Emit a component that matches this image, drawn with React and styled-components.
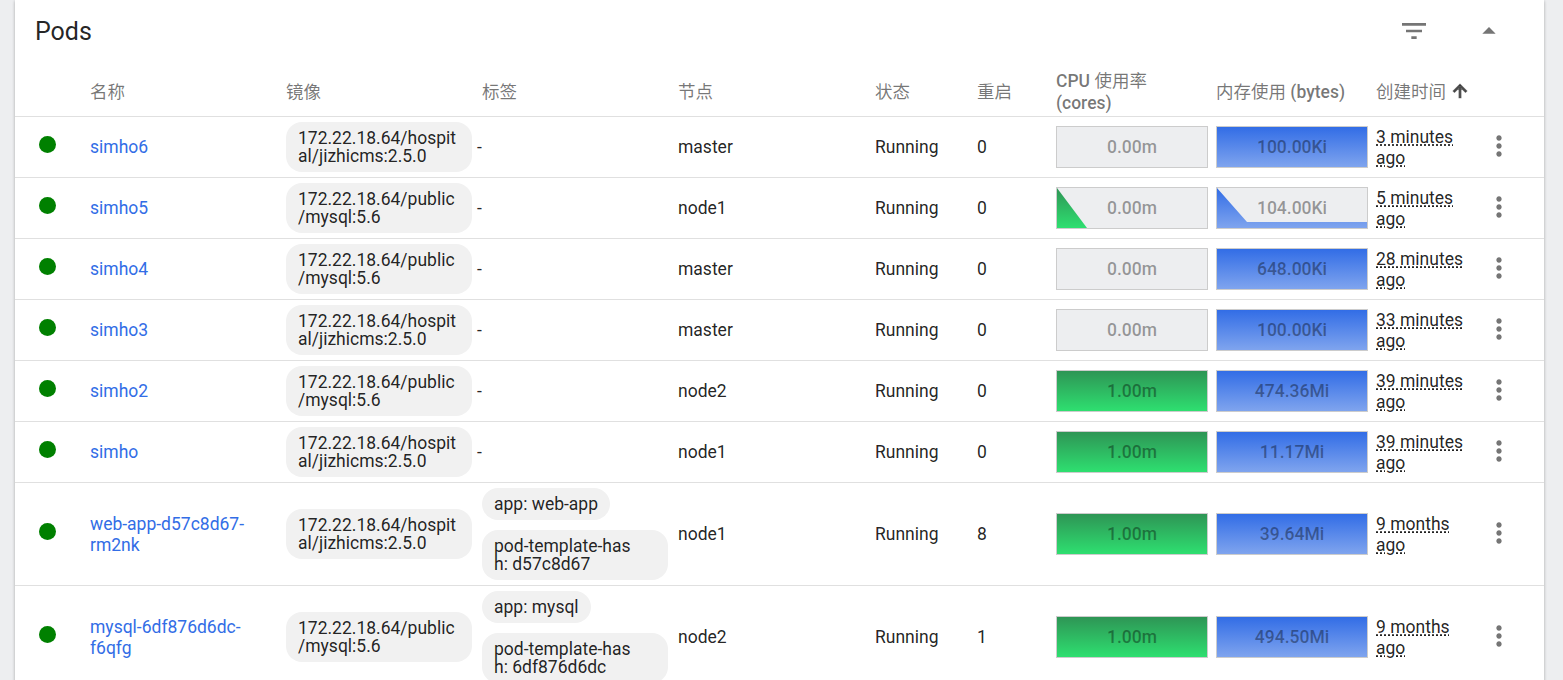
import React from 'react';
import styled, { createGlobalStyle } from 'styled-components';

const GlobalStyle = createGlobalStyle`
  html, body {
    margin: 0;
    height: 680px;
    overflow: hidden;
    background: #edeef0;
    font-family: Roboto, "Noto Sans CJK SC", sans-serif;
    font-size: 17.5px;
    color: rgba(0, 0, 0, 0.87);
  }
`;

const COLUMNS = '70px 196px 196px 196px 197px 102px 79px 160px 160px 108px 65px';

const Card = styled.div`
  width: 1529px;
  margin-left: 15px;
  background: #fff;
  box-shadow: 0 1px 3px rgba(0, 0, 0, 0.3);
`;

const TitleBar = styled.div`
  height: 62px;
  margin-bottom: 4px;
  padding: 0 31px 0 20px;
  display: flex;
  align-items: center;
  gap: 27px;
`;

const Title = styled.div`
  flex: 1;
  padding-top: 2px;
  font-size: 25px;
  line-height: 32px;
`;

const ToolButton = styled.div`
  width: 48px;
  height: 48px;
  display: flex;
  align-items: center;
  justify-content: center;
  color: #757575;
`;

const HeaderRow = styled.div`
  display: grid;
  grid-template-columns: ${COLUMNS};
  align-items: center;
  box-sizing: border-box;
  height: 51px;
  padding-top: 2px;
  border-bottom: 1px solid #e0e0e0;
`;

const HeaderCell = styled.div`
  padding: 0 5px;
  color: rgba(0, 0, 0, 0.54);
  font-weight: 500;
  line-height: 22px;
  display: flex;
  align-items: center;
  gap: 4px;
`;

const HeaderCjk = styled.span`
  font-weight: 400;
`;

const SortArrow = styled.span`
  display: flex;
  margin-bottom: 3px;

  path {
    stroke: currentColor;
    stroke-width: 1.5;
  }
`;

const Row = styled.div`
  display: grid;
  grid-template-columns: ${COLUMNS};
  align-items: center;
  border-bottom: 1px solid #e0e0e0;
`;

const DotCell = styled.div`
  padding-left: 24px;
`;

const Dot = styled.div`
  width: 17px;
  height: 17px;
  margin-bottom: 5px;
  border-radius: 50%;
  background: #008000;
`;

const Cell = styled.div`
  padding: ${({ $twoLine }) => ($twoLine ? '2px' : '0')} 5px 0;
  line-height: 21px;
`;

const NameLink = styled.a`
  color: #326de6;
  text-decoration: none;
`;

const PillStack = styled.div`
  display: flex;
  flex-direction: column;
  align-items: flex-start;
  gap: 10px;
  padding: 5px;
`;

const Pill = styled.div`
  width: ${({ $wide }) => ($wide ? '162px' : 'fit-content')};
  padding: 7px 12px;
  border-radius: 16px;
  background: #f1f1f1;
  line-height: 18px;
  white-space: pre-line;
`;

const Age = styled.span`
  text-decoration: underline dotted;
  text-underline-offset: 2px;
`;

const BarBox = styled.div`
  position: relative;
  width: 150px;
  height: 40px;
  border: 1px solid #ccc;
  background: #edeef0;
`;

const BarChart = styled.svg`
  position: absolute;
  inset: 0;
  display: block;
`;

const BarLabel = styled.div`
  position: absolute;
  inset: 0;
  display: flex;
  align-items: center;
  justify-content: center;
  color: rgba(0, 0, 0, 0.38);
  font-weight: 500;
`;

const MenuCell = styled.div`
  display: flex;
  padding: 0 0 2px 4px;
  color: #757575;
`;

const shapes = {
  full: '0,0 150,0 150,40 0,40',
  drop: '0,0 30,40 0,40',
  step: '0,0 30,34 150,34 150,40 0,40',
};

const palette = {
  cpu: ['#2e9555', '#2edf70'],
  mem: ['#326de6', '#7fa4ee'],
};

function Bar({ kind, shape, value }) {
  const id = `${kind}-fill`;
  return (
    <BarBox>
      {shape && (
        <BarChart width='150' height='40' viewBox='0 0 150 40'>
          <defs>
            <linearGradient id={id} x1='0' y1='0' x2='0' y2='40' gradientUnits='userSpaceOnUse'>
              <stop offset='0' stopColor={palette[kind][0]} />
              <stop offset='1' stopColor={palette[kind][1]} />
            </linearGradient>
          </defs>
          <polygon points={shapes[shape]} fill={`url(#${id})`} />
        </BarChart>
      )}
      <BarLabel>{value}</BarLabel>
    </BarBox>
  );
}

const Icon = ({ d, size = 32 }) => (
  <svg width={size} height={size} viewBox='0 0 24 24' fill='currentColor'>
    <path d={d} />
  </svg>
);

const FILTER = 'M10 18h4v-2h-4v2zM3 6v2h18V6H3zm3 7h12v-2H6v2z';
const DROP_UP = 'M7 14l5-5 5 5z';
const ARROW_UP = 'M4 12l1.41 1.41L11 7.83V20h2V7.83l5.58 5.59L20 12l-8-8-8 8z';
const MORE = 'M12 8c1.1 0 2-.9 2-2s-.9-2-2-2-2 .9-2 2 .9 2 2 2zm0 2c-1.1 0-2 .9-2 2s.9 2 2 2 2-.9 2-2-.9-2-2-2zm0 6c-1.1 0-2 .9-2 2s.9 2 2 2 2-.9 2-2-.9-2-2-2z';

const HOSPITAL = '172.22.18.64/hospit\nal/jizhicms:2.5.0';
const MYSQL = '172.22.18.64/public\n/mysql:5.6';

const pods = [
  { name: 'simho6', image: HOSPITAL, node: 'master', restarts: 0, cpu: '0.00m', mem: '100.00Ki', memShape: 'full', age: '3 minutes ago' },
  { name: 'simho5', image: MYSQL, node: 'node1', restarts: 0, cpu: '0.00m', cpuShape: 'drop', mem: '104.00Ki', memShape: 'step', age: '5 minutes ago' },
  { name: 'simho4', image: MYSQL, node: 'master', restarts: 0, cpu: '0.00m', mem: '648.00Ki', memShape: 'full', age: '28 minutes ago' },
  { name: 'simho3', image: HOSPITAL, node: 'master', restarts: 0, cpu: '0.00m', mem: '100.00Ki', memShape: 'full', age: '33 minutes ago' },
  { name: 'simho2', image: MYSQL, node: 'node2', restarts: 0, cpu: '1.00m', cpuShape: 'full', mem: '474.36Mi', memShape: 'full', age: '39 minutes ago' },
  { name: 'simho', image: HOSPITAL, node: 'node1', restarts: 0, cpu: '1.00m', cpuShape: 'full', mem: '11.17Mi', memShape: 'full', age: '39 minutes ago' },
  { name: 'web-app-d57c8d67-rm2nk', image: HOSPITAL, labels: ['app: web-app', 'pod-template-has\nh: d57c8d67'], node: 'node1', restarts: 8, cpu: '1.00m', cpuShape: 'full', mem: '39.64Mi', memShape: 'full', age: '9 months ago' },
  { name: 'mysql-6df876d6dc-f6qfg', image: MYSQL, labels: ['app: mysql', 'pod-template-has\nh: 6df876d6dc'], node: 'node2', restarts: 1, cpu: '1.00m', cpuShape: 'full', mem: '494.50Mi', memShape: 'full', age: '9 months ago' },
];

export default function App() {
  return (
    <Card>
      <GlobalStyle />
      <TitleBar>
        <Title>Pods</Title>
        <ToolButton><Icon d={FILTER} /></ToolButton>
        <ToolButton><Icon d={DROP_UP} /></ToolButton>
      </TitleBar>
      <HeaderRow>
        <div />
        <HeaderCell><HeaderCjk>名称</HeaderCjk></HeaderCell>
        <HeaderCell><HeaderCjk>镜像</HeaderCjk></HeaderCell>
        <HeaderCell><HeaderCjk>标签</HeaderCjk></HeaderCell>
        <HeaderCell><HeaderCjk>节点</HeaderCjk></HeaderCell>
        <HeaderCell><HeaderCjk>状态</HeaderCjk></HeaderCell>
        <HeaderCell><HeaderCjk>重启</HeaderCjk></HeaderCell>
        <HeaderCell><div>CPU <HeaderCjk>使用率</HeaderCjk><br />(cores)</div></HeaderCell>
        <HeaderCell><div><HeaderCjk>内存使用</HeaderCjk> (bytes)</div></HeaderCell>
        <HeaderCell>
          <HeaderCjk>创建时间</HeaderCjk>
          <SortArrow><Icon d={ARROW_UP} size={20} /></SortArrow>
        </HeaderCell>
        <div />
      </HeaderRow>
      {pods.map((pod) => (
        <Row key={pod.name}>
          <DotCell><Dot /></DotCell>
          <Cell $twoLine={Boolean(pod.labels)}><NameLink href='#'>{pod.name}</NameLink></Cell>
          <PillStack><Pill $wide>{pod.image}</Pill></PillStack>
          {pod.labels ? (
            <PillStack>
              {pod.labels.map((label) => (
                <Pill key={label} $wide={label.includes('\n')}>{label}</Pill>
              ))}
            </PillStack>
          ) : (
            <div>-</div>
          )}
          <Cell>{pod.node}</Cell>
          <Cell>Running</Cell>
          <Cell>{pod.restarts}</Cell>
          <Cell><Bar kind='cpu' shape={pod.cpuShape} value={pod.cpu} /></Cell>
          <Cell><Bar kind='mem' shape={pod.memShape} value={pod.mem} /></Cell>
          <Cell $twoLine><Age>{pod.age}</Age></Cell>
          <MenuCell><Icon d={MORE} /></MenuCell>
        </Row>
      ))}
    </Card>
  );
}
